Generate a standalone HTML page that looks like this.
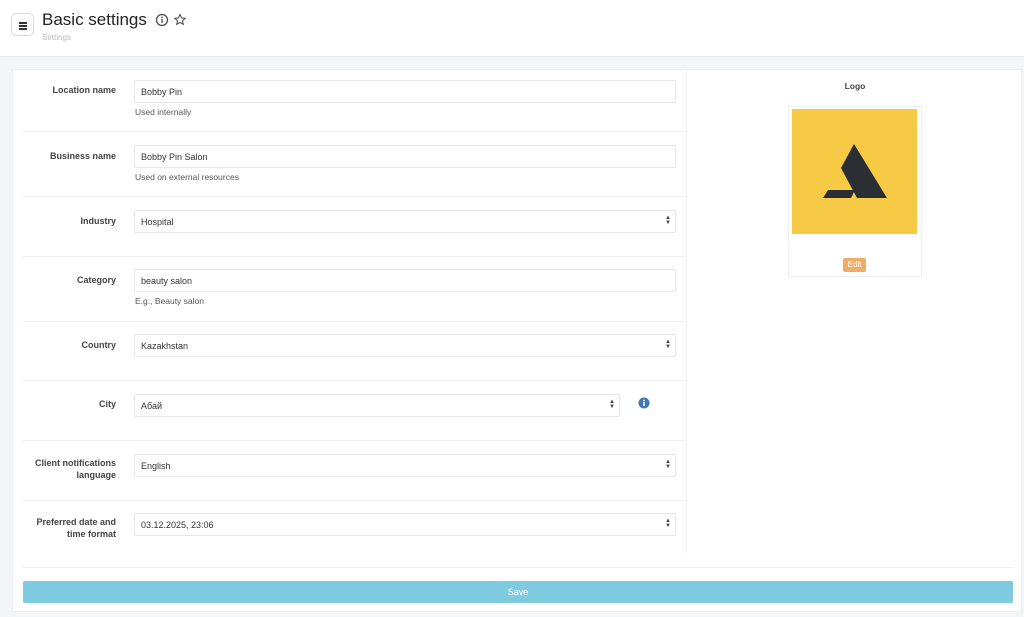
<!DOCTYPE html>
<html><head><style>
*{box-sizing:border-box;margin:0;padding:0}
body{width:1024px;height:617px;background:#f4f5f8;font-family:"Liberation Sans",sans-serif;position:relative;overflow:hidden;color:#333}
.hdr{position:absolute;left:0;top:0;width:1024px;height:57px;background:#fff;border-bottom:1px solid #e8e9ee}
.menu{position:absolute;left:11px;top:13px;width:23px;height:23px;border:1px solid #d8d8de;border-radius:5px;background:#fff}
.menu i{position:absolute;left:7px;width:8px;height:1.5px;background:#333}
h1{position:absolute;left:42px;top:10px;font-size:17px;font-weight:normal;color:#222}
.sub{position:absolute;left:42px;top:33px;font-size:8px;color:#bbb}
.card{position:absolute;left:12px;top:69px;width:1010px;height:543px;background:#fff;border:1px solid #eceef2}
.row{position:absolute;left:10px;width:663px;border-bottom:1px solid #eef0f3}
.lab{position:absolute;right:570px;font-size:9px;font-weight:bold;color:#444;text-align:right;line-height:12px;width:84px}
.inp{position:absolute;left:111px;height:23px;border:1px solid #e6e7eb;border-radius:2px;font-size:9px;padding:6px 6px;color:#333;background:#fff}
.inp .ar{position:absolute;right:4px;top:5px;font-size:6px;line-height:5px;color:#444}
.help{position:absolute;left:112px;font-size:8.5px;color:#555}
.vline{position:absolute;left:673px;top:0;width:1px;height:483px;background:#eef0f3}
</style></head><body>
<div class="hdr">
<div class="menu"><i style="top:8px"></i><i style="top:11px"></i><i style="top:14px"></i></div>
<h1>Basic settings</h1>
<svg style="position:absolute;left:155px;top:13px" width="32" height="14"><circle cx="7" cy="7" r="5.5" fill="none" stroke="#444" stroke-width="1.2"/><line x1="7" y1="6" x2="7" y2="10" stroke="#444" stroke-width="1.3"/><circle cx="7" cy="4.2" r=".8" fill="#444"/><path d="M25 1.5l1.6 3.4 3.6.4-2.7 2.5.8 3.6-3.3-1.9-3.3 1.9.8-3.6-2.7-2.5 3.6-.4z" fill="none" stroke="#444" stroke-width="1"/></svg>
<div class="sub">Settings</div>
</div>
<div class="card">
<div class="vline"></div>
<div class="row" style="top:0;height:62px"><div class="lab" style="top:14px">Location name</div><div class="inp" style="top:10px;width:542px">Bobby Pin</div><div class="help" style="top:37px">Used internally</div></div>
<div class="row" style="top:62px;height:65px"><div class="lab" style="top:18px">Business name</div><div class="inp" style="top:13px;width:542px">Bobby Pin Salon</div><div class="help" style="top:40px">Used on external resources</div></div>
<div class="row" style="top:127px;height:60px"><div class="lab" style="top:18px">Industry</div><div class="inp" style="top:13px;width:542px">Hospital<span class="ar">▲<br>▼</span></div></div>
<div class="row" style="top:187px;height:65px"><div class="lab" style="top:17px">Category</div><div class="inp" style="top:12px;width:542px">beauty salon</div><div class="help" style="top:39px">E.g., Beauty salon</div></div>
<div class="row" style="top:252px;height:59px"><div class="lab" style="top:17px">Country</div><div class="inp" style="top:12px;width:542px">Kazakhstan<span class="ar">▲<br>▼</span></div></div>
<div class="row" style="top:311px;height:60px"><div class="lab" style="top:17px">City</div><div class="inp" style="top:13px;width:486px">Абай<span class="ar">▲<br>▼</span></div>
<svg style="position:absolute;left:615px;top:16px" width="12" height="12"><circle cx="6" cy="6" r="5.5" fill="#3d76b8"/><rect x="5.2" y="5" width="1.6" height="4" fill="#fff"/><circle cx="6" cy="3.4" r=".9" fill="#fff"/></svg></div>
<div class="row" style="top:371px;height:60px"><div class="lab" style="top:16px">Client notifications language</div><div class="inp" style="top:13px;width:542px">English<span class="ar">▲<br>▼</span></div></div>
<div class="row" style="top:431px;height:58px;border:none"><div class="lab" style="top:15px">Preferred date and time format</div><div class="inp" style="top:12px;width:542px">03.12.2025, 23:06<span class="ar">▲<br>▼</span></div></div>
<div style="position:absolute;left:10px;top:497px;width:990px;height:1px;background:#eef0f3"></div>
<div style="position:absolute;left:10px;top:511px;width:990px;height:22px;background:#7ecbe0;border-radius:2px;color:#fff;font-size:9px;text-align:center;line-height:22px">Save</div>
<div style="position:absolute;left:775px;top:11px;width:134px;text-align:center;font-size:8.5px;font-weight:bold;color:#444">Logo</div>
<div style="position:absolute;left:775px;top:36px;width:134px;height:171px;border:1px solid #eceef2">
<div style="position:absolute;left:3px;top:2px;width:125px;height:125px;background:#f6ca45"></div>
<svg style="position:absolute;left:0;top:0" width="134" height="140"><polygon points="65,37 98,91 68,91 52,61" fill="#2b2f33"/><polygon points="34,91 62,91 66,83 39,83" fill="#2b2f33"/></svg>
<div style="position:absolute;left:54px;top:151px;width:23px;height:14px;background:#eeae67;border-radius:2px;color:#fff;font-size:8px;text-align:center;line-height:14px">Edit</div>
</div>
</div>
</body></html>
